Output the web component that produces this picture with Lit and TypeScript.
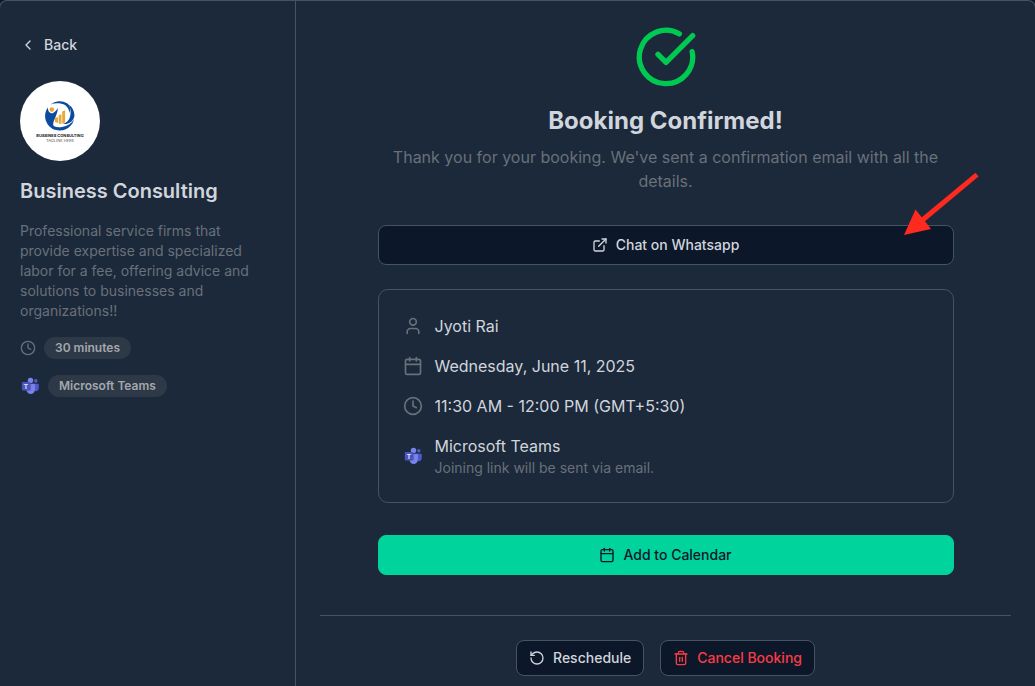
import { LitElement, html, svg, css, nothing } from "lit";
import type { SVGTemplateResult } from "lit";
import { customElement, property } from "lit/decorators.js";

const ICONS: Record<string, SVGTemplateResult> = {
  back: svg`<path d="m15 18-6-6 6-6"/>`,
  clock: svg`<circle cx="12" cy="12" r="10"/><path d="M12 6v6l4 2"/>`,
  check: svg`<path d="M21.801 10A10 10 0 1 1 17 3.335"/><path d="m9 11 3 3L22 4"/>`,
  external: svg`<path d="M15 3h6v6"/><path d="M10 14 21 3"/><path d="M18 13v6a2 2 0 0 1-2 2H5a2 2 0 0 1-2-2V8a2 2 0 0 1 2-2h6"/>`,
  user: svg`<path d="M19 21v-2a4 4 0 0 0-4-4H9a4 4 0 0 0-4 4v2"/><circle cx="12" cy="7" r="4"/>`,
  calendar: svg`<path d="M8 2v4"/><path d="M16 2v4"/><rect width="18" height="18" x="3" y="4" rx="2"/><path d="M3 10h18"/>`,
  rotate: svg`<path d="M3 12a9 9 0 1 0 9-9 9.75 9.75 0 0 0-6.74 2.74L3 8"/><path d="M3 3v5h5"/>`,
  trash: svg`<path d="M3 6h18"/><path d="M19 6v14a2 2 0 0 1-2 2H7a2 2 0 0 1-2-2V6"/><path d="M8 6V4a2 2 0 0 1 2-2h4a2 2 0 0 1 2 2v2"/><path d="M10 11v6"/><path d="M14 11v6"/>`,
};

@customElement("line-icon")
class LineIcon extends LitElement {
  static styles = css`
    :host { display: block; flex: none; width: 16px; height: 16px; }
    .glyph {
      display: block; width: 100%; height: 100%;
      fill: none; stroke: currentColor; stroke-width: 2;
      stroke-linecap: round; stroke-linejoin: round;
    }
  `;
  @property() name = "";
  render() {
    return html`<svg class="glyph" viewBox="0 0 24 24" aria-hidden="true">${ICONS[this.name] ?? nothing}</svg>`;
  }
}

@customElement("teams-logo")
class TeamsLogo extends LitElement {
  static styles = css`
    :host { display: block; flex: none; width: 20px; height: 20px; }
    .logo { display: block; width: 100%; height: 100%; }
    .letter { font: 700 7px "Liberation Sans", Arial, sans-serif; fill: #dfe1fa; text-anchor: middle; }
  `;
  render() {
    return html`
      <svg class="logo" viewBox="0 0 20 20" aria-hidden="true">
        <circle cx="15.8" cy="4.9" r="1.8" fill="#5059c9"/>
        <path d="M13 7.8h5a.8.8 0 0 1 .8.8v3.700a3 3 0 0 1-5.800 1z" fill="#5059c9"/>
        <circle cx="10.5" cy="4.4" r="2.7" fill="#7b83eb"/>
        <path d="M6.6 7.8h7.6a.7.7 0 0 1 .7.7v5.3a4.2 4.2 0 0 1-8.4 0z" fill="#7b83eb"/>
        <path d="M7 7.8h4.2v5.8a1 1 0 0 1-1 1H6.6z" fill="#4a50b4" opacity=".5"/>
        <rect x="1.8" y="6" width="8.4" height="8.4" rx=".8" fill="#4b53bc"/>
        <text class="letter" x="6" y="12.7">T</text>
      </svg>
    `;
  }
}

@customElement("business-avatar")
class BusinessAvatar extends LitElement {
  static styles = css`
    :host { display: block; width: 80px; height: 80px; border-radius: 50%; overflow: hidden; background: #fff; }
    .logo { display: block; width: 100%; height: 100%; }
    .name { font: 700 4px Inter, sans-serif; fill: #222; text-anchor: middle; }
    .tagline { font: 400 4px Inter, sans-serif; fill: #555; text-anchor: middle; }
  `;
  render() {
    return html`
      <svg class="logo" viewBox="0 0 80 80" role="img" aria-label="Business Consulting logo">
        <g fill="#0b4a9c">
          <path d="M30.5 23.5A14.5 14.5 0 0 1 47 22.2C50 24 51 28 49.5 32C49 27 46 23.4 40.5 22.6C37 22 33.5 22.4 30.5 23.5Z"/>
          <path d="M48.8 23.5A14.5 14.5 0 0 1 54.5 34.5C54 40 49 43.5 43 43C49 41 51 36 50.5 29.5C50.3 27 49.8 25 48.8 23.5Z"/>
          <path d="M54 38.5A14.5 14.5 0 0 1 33 47.8C31 46.5 30 44.5 30.5 42C33 45.5 37 47 42 46C47.5 45 51.5 42.5 54 38.5Z"/>
          <path d="M28 26.2A14.5 14.5 0 0 0 35.5 48.9C33 46 32.5 43 34 39.5C35.5 36 37.5 32 38 27C36.5 29 35 31.5 32.5 32.2C29.5 32.5 27.5 29.5 28 26.2Z"/>
        </g>
        <g fill="#e8a83c">
          <circle cx="31.8" cy="28.6" r="2.3"/>
          <path d="M35 37l3-1v6l-3-1zM38.7 34.2l2.8-1V43l-2.8-.6zM42.2 30.5l2.900-1.200v12l-2.900 1.400z"/>
        </g>
        <text class="name" x="40" y="56">BUSSINES CONSULTING</text>
        <text class="tagline" x="40" y="60.5">TAGLINE HERE</text>
      </svg>
    `;
  }
}

@customElement("app-root")
class AppRoot extends LitElement {
  static styles = css`
    :host {
      display: block; overflow: hidden; background: #0f172b;
      font-family: Inter, "Noto Sans", sans-serif; font-size: 14px; line-height: 20px;
      color: #d1d5dc;
      --surface: #1b293b; --line: #465362; --muted: #697079; --dark: #0c172a;
    }
    * { box-sizing: border-box; }
    h1, h2, p, ul { margin: 0; padding: 0; }
    .shell {
      display: grid; grid-template-columns: 296px 1fr; min-height: 100vh;
      margin: 0 -1px; border: 1px solid var(--line); border-bottom: 0;
      border-radius: 8px 8px 0 0; background: var(--surface);
    }
    .side { padding: 26px 36px 26px 20px; border-right: 1px solid var(--line); }
    .btn {
      display: flex; align-items: center; justify-content: center; gap: 8px;
      font: 500 14px/20px Inter, "Noto Sans", sans-serif; color: inherit;
      height: 36px; padding: 0 12px; border: 1px solid var(--line); border-radius: 8px;
      background: var(--dark); cursor: pointer;
    }
    .btn.plain { padding: 0; border: 0; background: none; }
    .btn.block { width: 100%; height: 40px; }
    .btn.primary { background: #00d39b; border-color: #00d39b; color: #0c172a; }
    .btn.danger { color: #fb3b43; }
    .avatar { margin-top: 18px; }
    .name { margin-top: 16px; font-size: 20px; line-height: 28px; font-weight: 600; }
    .about { margin-top: 16px; color: var(--muted); }
    .facts { display: grid; gap: 16px; margin-top: 16px; list-style: none; }
    .fact { display: flex; align-items: center; gap: 8px; color: var(--muted); }
    .badge {
      padding: 3px 11px; border-radius: 11px; background: #2e3947; color: #a3a7ad;
      font-size: 12px; line-height: 16px; font-weight: 600;
    }
    .main { padding: 24px; }
    .column { max-width: 576px; margin: 0 auto; }
    .hero { text-align: center; }
    .tick { width: 64px; height: 64px; margin: 0 auto; color: #00c951; }
    .title { margin-top: 16px; font-size: 24px; line-height: 32px; font-weight: 700; }
    .lead { margin-top: 8px; font-size: 16px; line-height: 24px; color: var(--muted); }
    .chat { position: relative; margin-top: 32px; }
    .pointer { position: absolute; right: -25px; bottom: 30px; width: 75px; height: 63px; pointer-events: none; }
    .details {
      display: grid; gap: 16px; margin: 24px 0 32px; padding: 24px; list-style: none;
      border: 1px solid var(--line); border-radius: 10px; font-size: 16px; line-height: 24px;
    }
    .row { display: flex; align-items: center; gap: 12px; }
    .row line-icon { width: 20px; height: 20px; color: var(--muted); }
    .note { font-size: 14px; line-height: 20px; color: var(--muted); }
    .actions {
      display: flex; justify-content: center; gap: 16px; flex-wrap: wrap;
      margin-top: 40px; padding-top: 24px; border-top: 1px solid var(--line);
    }
  `;

  private details = [
    { icon: "user", text: "Jyoti Rai" },
    { icon: "calendar", text: "Wednesday, June 11, 2025" },
    { icon: "clock", text: "11:30 AM - 12:00 PM (GMT+5:30)" },
  ];

  render() {
    return html`
      <div class="shell">
        <aside class="side">
          <button class="btn plain" type="button"><line-icon name="back"></line-icon>Back</button>
          <business-avatar class="avatar"></business-avatar>
          <h2 class="name">Business Consulting</h2>
          <p class="about">Professional service firms that provide expertise and specialized labor for a fee, offering advice and solutions to businesses and organizations!!</p>
          <ul class="facts">
            <li class="fact"><line-icon name="clock"></line-icon><span class="badge">30 minutes</span></li>
            <li class="fact"><teams-logo></teams-logo><span class="badge">Microsoft Teams</span></li>
          </ul>
        </aside>
        <main class="main">
          <div class="column">
            <header class="hero">
              <line-icon class="tick" name="check"></line-icon>
              <h1 class="title">Booking Confirmed!</h1>
              <p class="lead">Thank you for your booking. We've sent a confirmation email with all the details.</p>
            </header>
            <div class="chat">
              <button class="btn block" type="button"><line-icon name="external"></line-icon>Chat on Whatsapp</button>
              <svg class="pointer" viewBox="0 0 75 63" aria-hidden="true">
                <path fill="#ff2a1f" d="M0 63 11.5 37.5 17.8 45.2 71.5 .8 74.5 4.5 21 49.3 27 57z"/>
              </svg>
            </div>
            <ul class="details">
              ${this.details.map((d) => html`<li class="row"><line-icon name=${d.icon}></line-icon><span>${d.text}</span></li>`)}
              <li class="row">
                <teams-logo></teams-logo>
                <div>
                  <p>Microsoft Teams</p>
                  <p class="note">Joining link will be sent via email.</p>
                </div>
              </li>
            </ul>
            <button class="btn block primary" type="button"><line-icon name="calendar"></line-icon>Add to Calendar</button>
          </div>
          <footer class="actions">
            <button class="btn" type="button"><line-icon name="rotate"></line-icon>Reschedule</button>
            <button class="btn danger" type="button"><line-icon name="trash"></line-icon>Cancel Booking</button>
          </footer>
        </main>
      </div>
    `;
  }
}
